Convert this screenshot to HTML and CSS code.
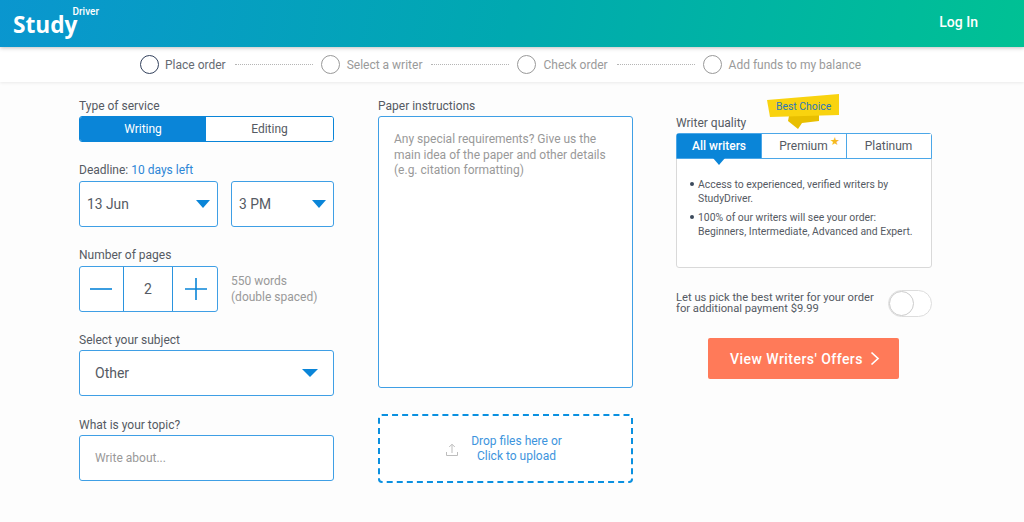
FILE: index.html
```html
<!DOCTYPE html>
<html lang="en">
<head>
<meta charset="utf-8">
<title>Study Driver</title>
<link rel="stylesheet" href="styles.css">
</head>
<body>
<header class="topbar">
  <a class="logo"><span class="logo-main">Study</span><span class="logo-sup">Driver</span></a>
  <a class="login">Log In</a>
</header>
<nav class="steps">
  <span class="dot dot-active"></span><span class="step step-active">Place order</span><span class="line"></span>
  <span class="dot"></span><span class="step">Select a writer</span><span class="line"></span>
  <span class="dot"></span><span class="step">Check order</span><span class="line"></span>
  <span class="dot"></span><span class="step">Add funds to my balance</span>
</nav>
<main class="form">
  <section class="col">
    <div class="field">
      <div class="label">Type of service</div>
      <div class="seg">
        <div class="seg-item seg-on">Writing</div>
        <div class="seg-item">Editing</div>
      </div>
    </div>
    <div class="field f-tight">
      <div class="label">Deadline: <span class="blue">10 days left</span></div>
      <div class="row">
        <div class="select sel-date">13 Jun<span class="caret"></span></div>
        <div class="select sel-time">3 PM<span class="caret"></span></div>
      </div>
    </div>
    <div class="field f-tight">
      <div class="label">Number of pages</div>
      <div class="row-pages">
        <div class="stepper">
          <div class="st-btn"><svg width="24" height="24" viewBox="0 0 24 24"><path d="M0 12h22" stroke="#0a85d8" stroke-width="1.6"/></svg></div>
          <div class="st-val">2</div>
          <div class="st-btn st-plus"><svg width="24" height="24" viewBox="0 0 24 24"><path d="M2 12h22M13 1v22" stroke="#0a85d8" stroke-width="1.6"/></svg></div>
        </div>
        <div class="words">550 words<br>(double spaced)</div>
      </div>
    </div>
    <div class="field f-subject">
      <div class="label">Select your subject</div>
      <div class="select sel-subject">Other<span class="caret"></span></div>
    </div>
    <div class="field f-next">
      <div class="label">What is your topic?</div>
      <div class="input">Write about...</div>
    </div>
  </section>
  <section class="col">
    <div class="field">
      <div class="label">Paper instructions</div>
      <div class="textarea">Any special requirements? Give us the main idea of the paper and other details (e.g. citation formatting)</div>
    </div>
    <div class="drop">
      <svg class="drop-icon" width="14" height="14" viewBox="0 0 14 14" fill="none" stroke="#bdbdbd" stroke-width="1"><path d="M7 10V1.500M4.200 4 7 1.200 9.800 4M1.500 9v3.500h11V9"/></svg>
      <div class="drop-text">Drop files here or<br>Click to upload</div>
    </div>
  </section>
  <section class="col col-right">
    <div class="label label-quality">Writer quality
      <div class="badge">
        <svg class="badge-art" width="72" height="36" viewBox="0 0 72 36"><path d="M22 22 52 20V27L35 29 31 35 21 27Z" fill="#e8bf00"/><path d="M0 6 72 0V21L3 23Z" fill="#f9d30f"/></svg>
        <span class="badge-text">Best Choice</span>
      </div>
    </div>
    <div class="quality">
      <div class="tabs">
        <div class="tab tab-on">All writers</div>
        <div class="tab">Premium<span class="star">★</span></div>
        <div class="tab">Platinum</div>
      </div>
      <ul class="benefits">
        <li>Access to experienced, verified writers by StudyDriver.</li>
        <li>100% of our writers will see your order: Beginners, Intermediate, Advanced and Expert.</li>
      </ul>
    </div>
    <div class="pick">
      <div class="pick-text">Let us pick the best writer for your order<br>for additional payment $9.99</div>
      <div class="toggle"><span class="knob"></span></div>
    </div>
    <a class="cta">View Writers' Offers
      <svg width="10" height="15" viewBox="0 0 10 15" fill="none" stroke="#fff" stroke-width="1.700"><path d="M1.500 1.500 8 7.500 1.500 13.500"/></svg>
    </a>
  </section>
</main>
</body>
</html>
```
FILE: styles.css
```css
* { box-sizing: border-box; }
html, body { margin: 0; height: 522px; overflow: hidden; }
body { background: #fdfdfd; font-family: Roboto, "Liberation Sans", sans-serif; font-size: 12px; color: #555a63; }

.topbar { height: 47px; background: linear-gradient(100deg, #0a96cf 0%, #00a9b0 50%, #00c194 100%); display: flex; justify-content: space-between; padding: 0 46px 0 13px; color: #fff; position: relative; z-index: 2; box-shadow: 0 1px 4px rgba(0,0,0,.25); }
.logo { display: flex; align-items: flex-start; }
.logo-main { font-family: "Open Sans", sans-serif; font-weight: 700; font-size: 22.700px; line-height: 22px; margin-top: 14px; }
.logo-sup { font-size: 10px; font-weight: 500; line-height: 8px; margin: 8px 0 0 -5px; }
.login { font-size: 14px; font-weight: 500; line-height: 45px; }

.steps { height: 35px; background: #fff; box-shadow: 0 1px 3px rgba(0,0,0,.08); display: flex; align-items: center; padding-left: 140px; font-size: 12px; color: #9a9a9a; }
.dot { width: 19px; height: 19px; border-radius: 50%; border: 1px solid #999; margin-right: 7px; background: #fff; }
.dot-active { border-color: #33415c; margin-right: 6px; }
.step-active { color: #666b73; }
.line { width: 78px; border-top: 1px dotted #b5b5b5; margin: 0 8px 0 9px; }

.form { display: grid; grid-template-columns: 255px 255px 256px; column-gap: 44px; padding: 17px 0 0 79px; }
.col { display: flex; flex-direction: column; }
.col-right { margin-left: -1px; width: 256px; }
.label { font-size: 12px; line-height: 15px; color: #555a63; margin-bottom: 2px; }
.blue { color: #2d86d6; }
.field { display: flex; flex-direction: column; }
.f-next { margin-top: 22px; }
.f-subject { margin-top: 21px; }
.f-tight { margin-top: 21px; }
.f-tight .label { margin-bottom: 3px; }

.seg { display: flex; height: 26px; border: 1px solid #0a85d8; border-radius: 3px; overflow: hidden; }
.seg-item { flex: 1; display: flex; align-items: center; justify-content: center; font-size: 12px; color: #555a63; background: #fff; }
.seg-on { flex: 0 0 126px; background: #0a85d8; color: #fff; }

.row { display: flex; gap: 13px; }
.select { position: relative; height: 46px; border: 1px solid #3f9fe5; border-radius: 3px; background: #fff; display: flex; align-items: center; padding-left: 7px; font-size: 13.800px; color: #555a63; }
.sel-date { width: 139px; }
.sel-time { width: 103px; }
.sel-subject { padding-left: 15px; font-size: 14px; }
.caret { position: absolute; right: 7px; top: 18px; border-left: 7px solid transparent; border-right: 7px solid transparent; border-top: 8px solid #0a85d8; }
.sel-subject .caret { right: 15px; border-left-width: 8px; border-right-width: 8px; }

.row-pages { display: flex; align-items: center; }
.stepper { width: 139px; height: 46px; border: 1px solid #3f9fe5; border-radius: 3px; background: #fff; display: flex; }
.st-btn { width: 43px; display: flex; align-items: center; justify-content: center; }
.st-plus { width: 44px; }
.st-val { width: 50px; border-left: 1px solid #2a93de; border-right: 1px solid #2a93de; display: flex; align-items: center; justify-content: center; font-size: 14px; }
.words { margin-left: 13px; font-size: 12px; line-height: 16px; color: #999; }

.input { height: 46px; border: 1px solid #3f9fe5; border-radius: 3px; background: #fff; display: flex; align-items: center; padding-left: 15px; font-size: 12px; color: #999; }

.textarea { height: 272px; border: 1px solid #3f9fe5; border-radius: 3px; background: #fff; padding: 15px 15px; font-size: 12px; line-height: 15.500px; color: #999; }
.drop { margin-top: 26px; height: 69px; border: 2px dashed #0a90e0; border-radius: 4px; display: flex; align-items: center; justify-content: center; gap: 12px; padding-right: 4px; background: #fff; }
.drop-icon { margin-top: 2px; }
.drop-text { font-size: 12px; line-height: 15px; color: #3d94dd; text-align: center; }

.label-quality { position: relative; margin: 17px 0 2px; }
.badge { position: absolute; left: 91px; top: -22px; width: 72px; height: 36px; }
.badge-art { position: absolute; left: 0; top: 0; }
.badge-text { position: absolute; left: 9px; top: 5px; color: #2d78b8; font-size: 10.400px; line-height: 15px; white-space: nowrap; }
.quality { height: 135px; border: 1px solid #d9d9d9; border-radius: 3px; background: #fff; }
.tabs { display: flex; height: 26px; margin: -1px -1px 0; border: 1px solid #4ba7e8; border-radius: 3px 3px 0 0; }
.tab { width: 85px; display: flex; align-items: center; justify-content: center; position: relative; padding-right: 1px; font-size: 12px; color: #555a63; border-left: 1px solid #4ba7e8; background: #fff; }
.tab:first-child { border-left: 0; width: 84px; padding-right: 0; }
.tab-on { background: #0a85d8; color: #fff; font-weight: 500; }
.tab-on::after { content: ""; position: absolute; left: 50%; margin-left: -6px; bottom: -7px; border-left: 6px solid transparent; border-right: 6px solid transparent; border-top: 7px solid #0a85d8; }
.star { position: absolute; right: 6px; top: 2px; color: #f5b921; font-size: 11px; line-height: 12px; }
.benefits { list-style: none; margin: 19px 0 0; padding: 0 14px 0 21px; font-size: 10.400px; line-height: 14px; color: #555a63; }
.benefits li { position: relative; margin-bottom: 5px; }
.benefits li::before { content: ""; position: absolute; left: -8px; top: 4px; width: 4px; height: 4px; border-radius: 50%; background: #3c4a5c; }

.pick { display: flex; justify-content: space-between; align-items: center; margin-top: 22px; }
.pick-text { font-size: 11.200px; line-height: 11px; padding-bottom: 2px; color: #555a63; }
.toggle { width: 44px; height: 27px; border: 1px solid #ddd; border-radius: 14px; background: #fff; }
.knob { display: block; width: 25px; height: 25px; border-radius: 50%; border: 1px solid #ccc; background: #fff; }

.cta { align-self: flex-start; margin: 21px 0 0 32px; width: 191px; height: 41px; padding-left: 3px; background: #ff7a59; border-radius: 2px; color: #fff; font-size: 14px; font-weight: 500; letter-spacing: .45px; display: flex; align-items: center; justify-content: center; gap: 7px; }
```
